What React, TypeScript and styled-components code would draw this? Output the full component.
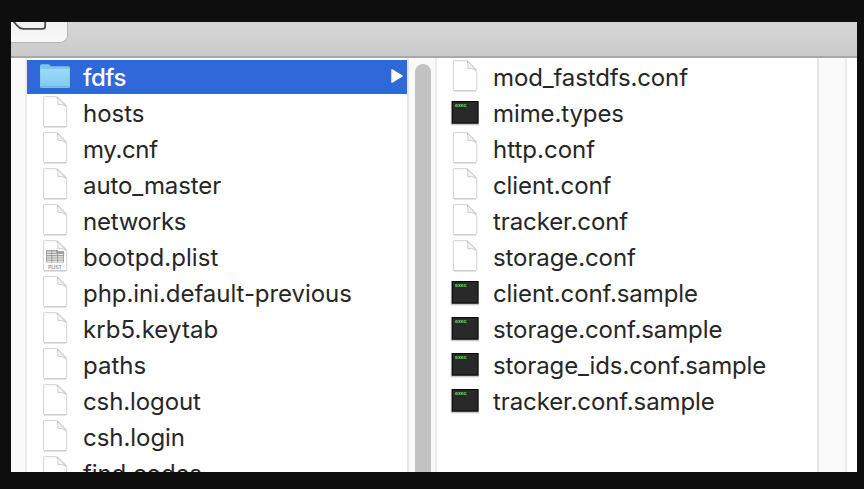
import React from "react";
import styled, { createGlobalStyle } from "styled-components";

const GlobalStyle = createGlobalStyle`
  body { margin: 0; background: #0e0e0e; overflow: hidden; }
`;

const Backdrop = styled.div`
  box-sizing: border-box;
  width: 864px;
  height: 489px;
  padding: 22px 7px 17px 11px;
  background: #0e0e0e;
`;

const FinderWindow = styled.main`
  display: flex;
  flex-direction: column;
  width: 846px;
  height: 450px;
  overflow: hidden;
  background: #fff;
  font-family: Inter, "Liberation Sans", sans-serif;
`;

const Toolbar = styled.header`
  box-sizing: border-box;
  flex: none;
  height: 36px;
  background: linear-gradient(#d6d6d6, #cbcbcb);
  border-bottom: 2px solid #a9a7a8;
`;

const ToolbarButton = styled.div`
  box-sizing: border-box;
  width: 57px;
  height: 21px;
  background: linear-gradient(#f1f1f1, #f8f8f8);
  border: solid #b5b5b5;
  border-width: 0 1px 1px 0;
  border-radius: 0 0 8px 0;
  svg { display: block; }
`;

const Browser = styled.div`
  display: flex;
  flex: 1;
  min-height: 0;
`;

const Gutter = styled.div<{ $width: number }>`
  box-sizing: border-box;
  flex: none;
  display: flex;
  width: ${(p) => p.$width}px;
  padding-left: 6px;
  background: #fafafa;
  border-right: 2px solid #ebebeb;
`;

const ScrollThumb = styled.div`
  width: 16px;
  margin-top: 6px;
  border-radius: 8px 8px 0 0;
  background: #c2c2c2;
`;

const Column = styled.ul`
  box-sizing: border-box;
  flex: none;
  display: flex;
  flex-direction: column;
  gap: 2px;
  width: 382px;
  margin: 0;
  padding: 2px 0 0;
  list-style: none;
  overflow: hidden;
  border-right: 2px solid #e6e6e6;
`;

const Row = styled.li<{ $selected: boolean }>`
  box-sizing: border-box;
  flex: none;
  display: flex;
  align-items: flex-start;
  gap: 13px;
  height: 34px;
  padding: 0 3px 0 13px;
  color: ${(p) => (p.$selected ? "#fff" : "#262626")};
  background: ${(p) => (p.$selected ? "#2f68d9" : "transparent")};
  svg { flex: none; display: block; }
`;

const Name = styled.span<{ $tracking: number; $selected: boolean }>`
  flex: 1;
  font-size: 24px;
  line-height: 36px;
  white-space: nowrap;
  font-weight: ${(p) => (p.$selected ? 500 : 400)};
  letter-spacing: ${(p) => p.$tracking}px;
`;

type Kind = "folder" | "doc" | "plist" | "exec";

function FolderIcon() {
  return (
    <svg width="30" height="34" viewBox="0 0 30 34">
      <defs>
        <linearGradient id="folder" x1="0" y1="0" x2="0" y2="1">
          <stop offset="0" stopColor="#9bdaf6" />
          <stop offset="1" stopColor="#82c9ee" />
        </linearGradient>
      </defs>
      <path d="M0 6Q0 4.3 1.7 4.3H8.4Q9.4 4.3 10 5.3L10.7 6.3H28.4Q30 6.3 30 8V26.4Q30 28 28.4 28H1.6Q0 28 0 26.4Z" fill="#7cc6ea" />
      <path d="M0.4 9H29.6V25.6Q29.6 27 28.2 27H1.8Q0.4 27 0.4 25.6Z" fill="url(#folder)" />
      <path d="M1 26.8H29" stroke="#5faed8" strokeWidth="0.8" />
    </svg>
  );
}

function DocIcon({ plist = false }: { plist?: boolean }) {
  return (
    <svg width="30" height="34" viewBox="0 0 30 34">
      <path d="M4.8 .6H16L18.3 1.5L25.8 9L26.7 11.7V29.6Q26.7 30.6 25.7 30.6H4.3Q3.4 30.6 3.4 29.6V2Q3.4 .6 4.8 .6Z" fill="#fefefe" stroke="#cbcbcb" strokeWidth="0.85" />
      <path d="M3.9 31H26.2" stroke="#b7b7b7" strokeWidth="0.7" />
      <path d="M17 1Q18.4 4 17.8 8.6Q22.7 7.9 26.1 10.3Z" fill="#f5f5f5" stroke="#c2c2c2" strokeWidth="0.8" />
      {plist && (
        <g>
          <path d="M6 10H17V11H24V22.5H6Z" fill="#a3a3a3" />
          <path d="M7 12.2H16M7 14.5H23M7 16.8H23M7 19.1H23M7 21.3H23" stroke="#e9e9e9" strokeWidth="1.2" />
          <path d="M11.8 10V22.5M17.6 10V22.5" stroke="#929292" strokeWidth="0.8" />
          <text x="15" y="28.9" textAnchor="middle" fontFamily="Inter" fontSize="4.9" fontWeight="600" fill="#8d8d8d">PLIST</text>
        </g>
      )}
    </svg>
  );
}

function ExecIcon() {
  return (
    <svg width="30" height="34" viewBox="0 0 30 34">
      <rect x="0.6" y="5" width="28.6" height="24.4" rx="1" fill="#000" opacity="0.13" />
      <rect x="1" y="5" width="28" height="23.5" fill="#b5b5b5" />
      <rect x="1.8" y="5" width="26.7" height="22.7" fill="#090909" />
      <rect x="2.8" y="6" width="24.6" height="20.6" fill="#292929" />
      <text x="5" y="11.4" fontFamily="Liberation Mono" fontSize="4.9" fontWeight="700" fill="#5ccb5e" stroke="#5ccb5e" strokeWidth="0.2">exec</text>
    </svg>
  );
}

function FileIcon({ kind }: { kind: Kind }) {
  if (kind === "folder") return <FolderIcon />;
  if (kind === "exec") return <ExecIcon />;
  return <DocIcon plist={kind === "plist"} />;
}

interface Entry {
  name: string;
  kind: Kind;
  tracking?: number;
  selected?: boolean;
}

const etcEntries: Entry[] = [
  { name: "fdfs", kind: "folder", selected: true, tracking: -0.5 },
  { name: "hosts", kind: "doc", tracking: 0 },
  { name: "my.cnf", kind: "doc", tracking: -0.35 },
  { name: "auto_master", kind: "doc" },
  { name: "networks", kind: "doc", tracking: -0.25 },
  { name: "bootpd.plist", kind: "plist", tracking: 0.08 },
  { name: "php.ini.default-previous", kind: "doc", tracking: -0.05 },
  { name: "krb5.keytab", kind: "doc", tracking: 0.1 },
  { name: "paths", kind: "doc", tracking: 0 },
  { name: "csh.logout", kind: "doc" },
  { name: "csh.login", kind: "doc", tracking: -0.05 },
  { name: "find.codes", kind: "doc" },
];

const fdfsEntries: Entry[] = [
  { name: "mod_fastdfs.conf", kind: "doc", tracking: -0.14 },
  { name: "mime.types", kind: "exec" },
  { name: "http.conf", kind: "doc", tracking: 0 },
  { name: "client.conf", kind: "doc" },
  { name: "tracker.conf", kind: "doc" },
  { name: "storage.conf", kind: "doc" },
  { name: "client.conf.sample", kind: "exec" },
  { name: "storage.conf.sample", kind: "exec" },
  { name: "storage_ids.conf.sample", kind: "exec", tracking: -0.13 },
  { name: "tracker.conf.sample", kind: "exec" },
];

function FileColumn({ entries }: { entries: Entry[] }) {
  return (
    <Column>
      {entries.map(({ name, kind, tracking = -0.1, selected = false }) => (
        <Row key={name} $selected={selected}>
          <FileIcon kind={kind} />
          <Name $tracking={tracking} $selected={selected}>{name}</Name>
          {selected && (
            <svg width="14" height="34" viewBox="0 0 14 34">
              <path d="M2 9.8L12.2 16L2 22.2Z" fill="#fff" stroke="#fff" strokeWidth="1.4" strokeLinejoin="round" />
            </svg>
          )}
        </Row>
      ))}
    </Column>
  );
}

export default function App() {
  return (
    <Backdrop>
      <GlobalStyle />
      <FinderWindow>
        <Toolbar>
          <ToolbarButton>
            <svg width="50" height="12" viewBox="0 0 50 12">
              <path d="M2 -1L6.2 3.7Q9 6.9 12 6.9H31.5Q34.2 6.9 34.2 4.2V-1" fill="none" stroke="#4a4a4a" strokeWidth="1.8" />
            </svg>
          </ToolbarButton>
        </Toolbar>
        <Browser>
          <Gutter $width={16} />
          <FileColumn entries={etcEntries} />
          <Gutter $width={28}>
            <ScrollThumb />
          </Gutter>
          <FileColumn entries={fdfsEntries} />
          <Gutter $width={28} />
        </Browser>
      </FinderWindow>
    </Backdrop>
  );
}
